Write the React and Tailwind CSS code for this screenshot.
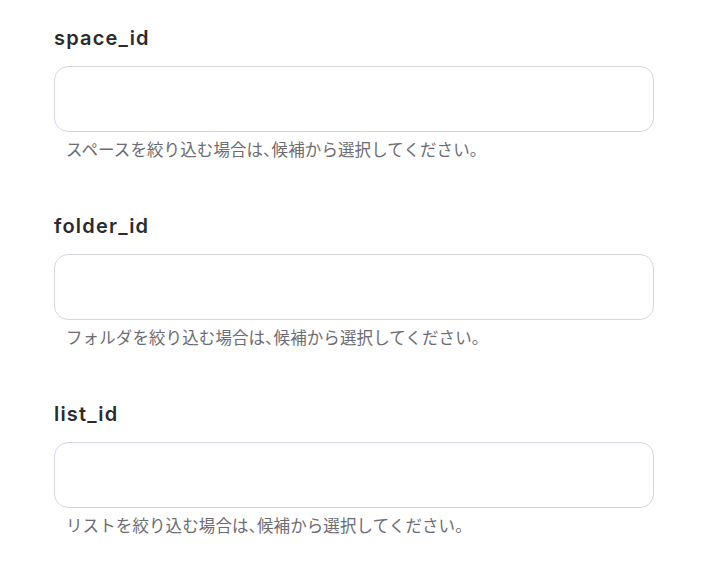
export default function App() {
  const fields = [
    { label: "space_id", a: "スペースを絞り込む場合は", b: "候補から選択してください。" },
    { label: "folder_id", a: "フォルダを絞り込む場合は", b: "候補から選択してください。" },
    { label: "list_id", a: "リストを絞り込む場合は", b: "候補から選択してください。" },
  ];
  return (
    <div
      className="w-[716px] h-[564px] bg-white pl-[54px] pt-[24px] overflow-hidden"
      style={{ fontFamily: 'Inter, "Noto Sans CJK JP", sans-serif' }}
    >
      <div className="flex flex-col gap-[50px] w-[600px]">
        {fields.map((f) => (
          <div key={f.label} className="flex flex-col">
            <div className="text-[20px] leading-[28px] font-semibold text-[#2b2b2e] tracking-[1.2px]">
              {f.label}
            </div>
            <div className="mt-[14px] h-[66px] rounded-[14px] border border-[#d5d6e2] bg-white" />
            <div className="mt-[6px] pl-[12px] text-[16.5px] leading-[24px] tracking-[0.1px] text-[#6c6c72] whitespace-nowrap">
              {f.a}
              <span className="[font-feature-settings:'palt']">、</span>
              {f.b}
            </div>
          </div>
        ))}
      </div>
    </div>
  );
}
